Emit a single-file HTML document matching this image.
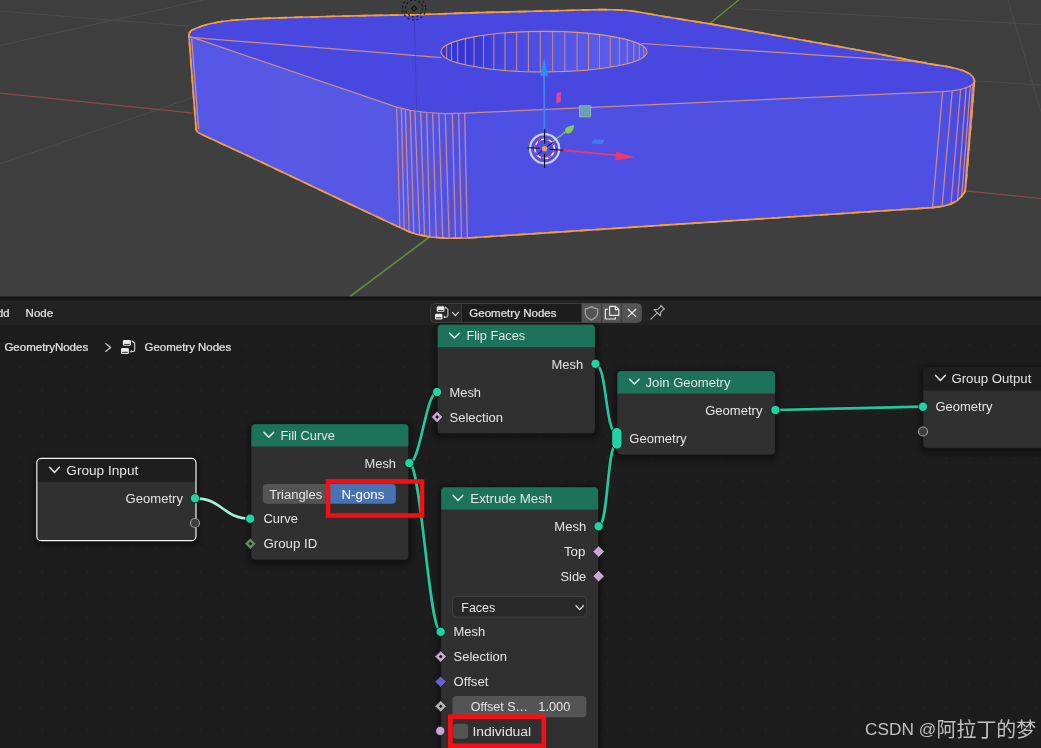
<!DOCTYPE html>
<html><head><meta charset="utf-8"><title>Geometry Nodes</title>
<style>
html,body{margin:0;padding:0;background:#1d1d1d;}
body{width:1041px;height:748px;overflow:hidden;}
svg{display:block;will-change:transform;}
text{font-family:"Liberation Sans", sans-serif;stroke-width:0.22px;paint-order:stroke fill;}
</style></head><body>
<svg width="1041" height="748" viewBox="0 0 1041 748">
<g id="viewport">
<rect x="0" y="0" width="1041" height="297" fill="#3f3f3f"/>
<g stroke="#4c4c4c" stroke-width="1" fill="none">
<line x1="0" y1="11.2" x2="188.6" y2="26.2"/>
<line x1="0" y1="45.5" x2="203" y2="0"/>
<line x1="0" y1="163.7" x2="192.6" y2="97.6"/>
<line x1="735" y1="8.5" x2="1041" y2="24.6"/>
<line x1="974" y1="80.8" x2="1041" y2="85"/>
<line x1="1008" y1="0" x2="1041" y2="112"/>
</g>
<line x1="0" y1="93.1" x2="193.2" y2="113.2" stroke="#8a474c" stroke-width="1.2"/>
<line x1="965.4" y1="190.8" x2="1041" y2="198.5" stroke="#8a474c" stroke-width="1.2"/>
<line x1="429.4" y1="237" x2="350" y2="296.5" stroke="#628c3a" stroke-width="1.6"/>
<line x1="710" y1="23.5" x2="738.6" y2="0" stroke="#628c3a" stroke-width="1.4"/>
</g>
<g id="object">
<polygon points="189.0,37.5 189.3,33.0 191.6,30.3 195.0,28.7 202.0,26.0 210.0,23.7 220.0,21.8 232.4,20.3 257.4,18.6 290.0,17.5 327.5,16.5 365.0,15.6 415.0,14.7 477.5,12.6 545.0,11.0 582.0,10.0 600.0,9.6 614.0,9.7 625.0,10.2 637.5,11.7 662.4,16.2 710.0,23.9 836.5,46.1 873.0,52.8 909.5,60.1 927.8,63.6 946.0,66.4 957.0,68.7 964.3,71.1 969.7,73.8 973.0,77.0 974.5,80.8 965.6,188.4 964.7,192.0 961.8,196.1 957.5,200.4 951.0,204.0 942.1,206.4 932.5,207.6 467.4,238.0 447.4,238.3 430.0,237.0 417.4,234.5 409.0,231.8 400.0,227.6 341.2,200.0 260.0,161.5 199.8,133.6 197.4,131.9 196.1,129.7" fill="#4e50e3"/>
<defs><linearGradient id="gfl" x1="190" y1="0" x2="400" y2="0" gradientUnits="userSpaceOnUse"><stop offset="0" stop-color="#5456e4"/><stop offset="0.5" stop-color="#585ae6"/><stop offset="1" stop-color="#5557e5"/></linearGradient><linearGradient id="gcl" x1="396" y1="0" x2="468" y2="0" gradientUnits="userSpaceOnUse"><stop offset="0" stop-color="#5557e5"/><stop offset="1" stop-color="#4e50e3"/></linearGradient><linearGradient id="ghole" x1="441" y1="0" x2="647" y2="0" gradientUnits="userSpaceOnUse"><stop offset="0" stop-color="#3a3ad8"/><stop offset="0.12" stop-color="#3434d6"/><stop offset="0.3" stop-color="#4446e0"/><stop offset="0.55" stop-color="#5255e6"/><stop offset="0.8" stop-color="#5a5ce8"/><stop offset="1" stop-color="#5658e6"/></linearGradient><clipPath id="chole"><ellipse cx="544" cy="51.7" rx="103" ry="20.3"/></clipPath></defs>
<polygon points="190.3,36.6 396.7,107.1 400.0,227.6 341.2,200.0 260.0,161.5 199.8,133.6 197.4,131.9 196.1,129.7" fill="url(#gfl)"/>
<polygon points="396.7,107.1 410.2,110.3 426.7,112.5 444.8,113.5 464.7,113.1 467.4,238.0 447.4,238.3 430.0,237.0 417.4,234.5 409.0,231.8 400.0,227.6" fill="url(#gcl)"/>
<defs><linearGradient id="gcr" x1="938" y1="0" x2="975" y2="0" gradientUnits="userSpaceOnUse"><stop offset="0" stop-color="#4e50e3"/><stop offset="0.5" stop-color="#4a4be0"/><stop offset="1" stop-color="#4242d8"/></linearGradient></defs>
<polygon points="942.6,91.6 952.2,90.9 961.8,89.2 969.0,86.6 973.4,83.7 974.5,80.8 965.6,188.4 964.7,192.0 961.8,196.1 957.5,200.4 951.0,204.0 942.1,206.4 932.5,207.6" fill="url(#gcr)"/>
<polygon points="189.0,37.5 189.3,33.0 191.6,30.3 195.0,28.7 202.0,26.0 210.0,23.7 220.0,21.8 232.4,20.3 257.4,18.6 290.0,17.5 327.5,16.5 365.0,15.6 415.0,14.7 477.5,12.6 545.0,11.0 582.0,10.0 600.0,9.6 614.0,9.7 625.0,10.2 637.5,11.7 662.4,16.2 710.0,23.9 836.5,46.1 873.0,52.8 909.5,60.1 927.8,63.6 946.0,66.4 957.0,68.7 964.3,71.1 969.7,73.8 973.0,77.0 974.5,80.8 973.4,83.7 969.0,86.6 961.8,89.2 952.2,90.9 942.6,91.6 464.7,113.1 444.8,113.5 426.7,112.5 410.2,110.3 396.7,107.1 190.3,36.6" fill="#4848e0"/>
<ellipse cx="544" cy="51.7" rx="103" ry="20.3" fill="url(#ghole)"/>
<g stroke="#ca8a8c" stroke-width="1" fill="none" clip-path="url(#chole)">
<line x1="446.7" y1="28" x2="446.7" y2="76"/>
<line x1="451.5" y1="28" x2="451.5" y2="76"/>
<line x1="457.7" y1="28" x2="457.7" y2="76"/>
<line x1="465.4" y1="28" x2="465.4" y2="76"/>
<line x1="474" y1="28" x2="474" y2="76"/>
<line x1="483.5" y1="28" x2="483.5" y2="76"/>
<line x1="493.9" y1="28" x2="493.9" y2="76"/>
<line x1="505" y1="28" x2="505" y2="76"/>
<line x1="516.7" y1="28" x2="516.7" y2="76"/>
<line x1="528.4" y1="28" x2="528.4" y2="76"/>
<line x1="540.3" y1="28" x2="540.3" y2="76"/>
<line x1="552.7" y1="28" x2="552.7" y2="76"/>
<line x1="564.9" y1="28" x2="564.9" y2="76"/>
<line x1="577" y1="28" x2="577" y2="76"/>
<line x1="588.5" y1="28" x2="588.5" y2="76"/>
<line x1="599.5" y1="28" x2="599.5" y2="76"/>
<line x1="610.2" y1="28" x2="610.2" y2="76"/>
<line x1="619.4" y1="28" x2="619.4" y2="76"/>
<line x1="627.2" y1="28" x2="627.2" y2="76"/>
<line x1="633.8" y1="28" x2="633.8" y2="76"/>
<line x1="639.3" y1="28" x2="639.3" y2="76"/>
<line x1="643.7" y1="28" x2="643.7" y2="76"/>
</g>
<ellipse cx="544" cy="51.7" rx="103" ry="20.3" fill="none" stroke="#e09a78" stroke-width="1.1"/>
<g stroke="#ca8a8c" stroke-width="1.25" fill="none">
<polyline points="974.5,80.8 973.4,83.7 969.0,86.6 961.8,89.2 952.2,90.9 942.6,91.6 464.7,113.1 444.8,113.5 426.7,112.5 410.2,110.3 396.7,107.1 190.3,36.6"/>
<line x1="190" y1="37.3" x2="441.5" y2="57.6"/>
<line x1="641.2" y1="43.5" x2="927" y2="62.4"/>
<line x1="396.7" y1="107.1" x2="399.9" y2="227.5"/>
<line x1="401.4" y1="108.3" x2="404.2" y2="229.6"/>
<line x1="405.3" y1="109.2" x2="409.1" y2="231.8"/>
<line x1="410.2" y1="110.3" x2="413.8" y2="233.4"/>
<line x1="414.9" y1="111.1" x2="419.6" y2="235.1"/>
<line x1="420.7" y1="111.9" x2="424.5" y2="236.1"/>
<line x1="426.7" y1="112.5" x2="429.9" y2="237"/>
<line x1="432.6" y1="113" x2="436.3" y2="237.6"/>
<line x1="438.8" y1="113.3" x2="442.7" y2="238"/>
<line x1="445.3" y1="113.5" x2="449.1" y2="238.2"/>
<line x1="452.3" y1="113.5" x2="455.5" y2="238.2"/>
<line x1="458.7" y1="113.3" x2="461.5" y2="238.1"/>
<line x1="464.7" y1="113.1" x2="467.3" y2="238"/>
<line x1="942.6" y1="91.6" x2="932.5" y2="207.6"/>
<line x1="952.2" y1="90.9" x2="942.1" y2="206.4"/>
<line x1="960.6" y1="89.5" x2="951" y2="204"/>
<line x1="966.2" y1="87.8" x2="957.5" y2="200.4"/>
<line x1="970.3" y1="85.9" x2="961.8" y2="196.1"/>
<line x1="972.7" y1="84.3" x2="964.7" y2="192"/>
</g>
<line x1="414.3" y1="15" x2="416.7" y2="111.5" stroke="#34349a" stroke-width="0.9" opacity="0.5"/>
<polygon points="189.0,37.5 189.3,33.0 191.6,30.3 195.0,28.7 202.0,26.0 210.0,23.7 220.0,21.8 232.4,20.3 257.4,18.6 290.0,17.5 327.5,16.5 365.0,15.6 415.0,14.7 477.5,12.6 545.0,11.0 582.0,10.0 600.0,9.6 614.0,9.7 625.0,10.2 637.5,11.7 662.4,16.2 710.0,23.9 836.5,46.1 873.0,52.8 909.5,60.1 927.8,63.6 946.0,66.4 957.0,68.7 964.3,71.1 969.7,73.8 973.0,77.0 974.5,80.8 965.6,188.4 964.7,192.0 961.8,196.1 957.5,200.4 951.0,204.0 942.1,206.4 932.5,207.6 467.4,238.0 447.4,238.3 430.0,237.0 417.4,234.5 409.0,231.8 400.0,227.6 341.2,200.0 260.0,161.5 199.8,133.6 197.4,131.9 196.1,129.7" fill="none" stroke="#e69c6a" stroke-width="1.6" stroke-linejoin="round"/>
<polygon points="189.0,37.5 189.3,33.0 191.6,30.3 195.0,28.7 202.0,26.0 210.0,23.7 220.0,21.8 232.4,20.3 257.4,18.6 290.0,17.5 327.5,16.5 365.0,15.6 415.0,14.7 477.5,12.6 545.0,11.0 582.0,10.0 600.0,9.6 614.0,9.7 625.0,10.2 637.5,11.7 662.4,16.2 710.0,23.9 836.5,46.1 873.0,52.8 909.5,60.1 927.8,63.6 946.0,66.4 957.0,68.7 964.3,71.1 969.7,73.8 973.0,77.0 974.5,80.8 965.6,188.4 964.7,192.0 961.8,196.1 957.5,200.4 951.0,204.0 942.1,206.4 932.5,207.6 467.4,238.0 447.4,238.3 430.0,237.0 417.4,234.5 409.0,231.8 400.0,227.6 341.2,200.0 260.0,161.5 199.8,133.6 197.4,131.9 196.1,129.7" fill="none" stroke="#f5a328" stroke-width="1.6" stroke-linejoin="round" stroke-dasharray="9 7"/>
<line x1="191.7" y1="38.5" x2="198.7" y2="129" stroke="#d09088" stroke-width="1.2"/>
</g>
<g id="light" fill="none" stroke="#101010" stroke-width="1.1">
<path d="M414.1 5.9 L416.6 8.4 L414.1 10.9 L411.6 8.4 Z"/>
<circle cx="414.1" cy="8.4" r="8.4" stroke-dasharray="2 2.4"/>
<circle cx="414.1" cy="8.4" r="11.6" stroke-dasharray="2 2.6"/>
</g>
<g id="gizmo">
<line x1="544.4" y1="131" x2="544.1" y2="75" stroke="#3f86ee" stroke-width="1.7"/>
<polygon points="544.1,57.8 547.9,76 540.3,76" fill="#2d8cf5"/>
<polygon points="556.6,93 561,91.7 560.6,102 556.3,103.2" fill="#e0469a"/>
<rect x="579.6" y="105.8" width="10.8" height="11" fill="#6aa8b4" stroke="#9cc89a" stroke-width="1" opacity="0.9"/>
<polygon points="593.5,139.5 604.6,139.8 602.4,143.9 591.4,143.6" fill="#3c86f0" opacity="0.8"/>
<line x1="552" y1="142" x2="566.5" y2="131.2" stroke="#86c070" stroke-width="1.5" opacity="0.9"/>
<path d="M574.4 124.9 Q573.8 129.5 571.6 132 Q569 134.6 566.3 133.2 Q564.2 131.2 565.3 128.6 Q567 126 574.4 124.9 Z" fill="#82c85a"/>
<line x1="560.6" y1="150" x2="617" y2="155.3" stroke="#de3a7e" stroke-width="1.8"/>
<polygon points="634.5,157.2 615.4,160.6 616.3,151.5" fill="#ee3a6a"/>
<circle cx="544.6" cy="148.7" r="14.6" fill="none" stroke="#cfcff2" stroke-width="2.2"/>
<circle cx="544.6" cy="148.7" r="9.8" fill="none" stroke="#ece8f4" stroke-width="1.5"/>
<circle cx="544.6" cy="148.7" r="9.8" fill="none" stroke="#d02a58" stroke-width="1.5" stroke-dasharray="3.85 3.85"/>
<g stroke="#0a0a28" stroke-width="1.1"><line x1="544.6" y1="129.2" x2="544.6" y2="143.7"/><line x1="544.6" y1="153.7" x2="544.6" y2="167.7"/><line x1="527.6" y1="147.7" x2="539.6" y2="148.2"/><line x1="549.6" y1="149.2" x2="563.6" y2="150.2"/><line x1="537.6" y1="154.2" x2="542.1" y2="150.7" stroke-width="1"/><line x1="547.1" y1="146.7" x2="552.6" y2="142.7" stroke-width="1"/></g>
<circle cx="544.6" cy="148.7" r="2.6" fill="#f0a23c"/>
</g>
<rect x="0" y="296.5" width="1041" height="3.5" fill="#161616"/>
<rect x="0" y="300" width="1041" height="448" fill="#1d1d1d"/>
<defs><filter id="blur" x="-20%" y="-20%" width="140%" height="140%"><feGaussianBlur stdDeviation="3"/></filter></defs>
<defs><pattern id="dots" x="8.50" y="-6.82" width="22.6" height="22.68" patternUnits="userSpaceOnUse"><rect x="10.50" y="10.54" width="1.6" height="1.6" fill="#262626"/></pattern></defs>
<rect x="0" y="326" width="1041" height="422" fill="url(#dots)"/>
<rect x="0" y="299.8" width="1041" height="25.3" fill="#222222"/>
<text x="-10.6" y="317.0" font-size="10.7" fill="#e4e4e4" stroke="#e4e4e4" text-anchor="start" textLength="20.0" lengthAdjust="spacingAndGlyphs">Add</text>
<text x="25.6" y="317.0" font-size="10.7" fill="#e4e4e4" stroke="#e4e4e4" text-anchor="start" textLength="27.6" lengthAdjust="spacingAndGlyphs">Node</text>
<text x="4.4" y="351.0" font-size="10.7" fill="#e4e4e4" stroke="#e4e4e4" text-anchor="start" textLength="83.8" lengthAdjust="spacingAndGlyphs">GeometryNodes</text>
<polyline points="105.8,343.6 110.6,347.5 105.8,351.4" fill="none" stroke="#dcdcdc" stroke-width="1.2" stroke-linecap="round" stroke-linejoin="round"/>
<g transform="translate(121.0,340.0) scale(1.0)">
<rect x="1.9" y="0" width="8.1" height="5.85" rx="1.3" fill="#ececec"/>
<rect x="0" y="7.9" width="7.9" height="6.2" rx="1.3" fill="#ececec"/>
<rect x="3.2" y="3.9" width="5.6" height="0.9" fill="#1a1a1a"/>
<rect x="1.2" y="11.8" width="5.6" height="0.95" fill="#1a1a1a"/>
<path d="M11 1.2 L13.7 3 V10 Q13.7 11.4 12.3 11.4 H10.4" fill="none" stroke="#e0e0e0" stroke-width="1.05" stroke-linejoin="round"/>
<path d="M10.9 0 V2.6 L12.6 1.7 Z" fill="#e0e0e0"/>
<path d="M10.6 9.9 V12.9 L8.9 11.4 Z" fill="#e0e0e0"/>
</g>
<text x="144.6" y="350.8" font-size="10.7" fill="#e4e4e4" stroke="#e4e4e4" text-anchor="start" textLength="86.6" lengthAdjust="spacingAndGlyphs">Geometry Nodes</text>
<rect x="33.8" y="457.3" width="165.2" height="88.4" rx="7" fill="#000" opacity="0.4" filter="url(#blur)"/>
<clipPath id="cn36_458"><rect x="36.8" y="458.3" width="159.2" height="82.4" rx="4.5"/></clipPath>
<g clip-path="url(#cn36_458)"><rect x="36.8" y="458.3" width="159.2" height="82.4" fill="#303030"/>
<rect x="36.8" y="458.3" width="159.2" height="23.5" fill="#1e1e1e"/></g>
<rect x="36.8" y="458.3" width="159.2" height="82.4" rx="4.5" fill="none" stroke="#f2f2f2" stroke-width="1.2"/>
<rect x="248.0" y="422.7" width="163.8" height="142.3" rx="7" fill="#000" opacity="0.4" filter="url(#blur)"/>
<clipPath id="cn251_423"><rect x="251.0" y="423.7" width="157.8" height="136.3" rx="4.5"/></clipPath>
<g clip-path="url(#cn251_423)"><rect x="251.0" y="423.7" width="157.8" height="136.3" fill="#303030"/>
<rect x="251.0" y="423.7" width="157.8" height="22.8" fill="#1d725a"/></g>
<rect x="251.0" y="423.7" width="157.8" height="136.3" rx="4.5" fill="none" stroke="#161616" stroke-width="0.8" opacity="0.8"/>
<rect x="434.2" y="323.2" width="164.2" height="115.5" rx="7" fill="#000" opacity="0.4" filter="url(#blur)"/>
<clipPath id="cn437_324"><rect x="437.2" y="324.2" width="158.2" height="109.5" rx="4.5"/></clipPath>
<g clip-path="url(#cn437_324)"><rect x="437.2" y="324.2" width="158.2" height="109.5" fill="#303030"/>
<rect x="437.2" y="324.2" width="158.2" height="22.9" fill="#1d725a"/></g>
<rect x="437.2" y="324.2" width="158.2" height="109.5" rx="4.5" fill="none" stroke="#161616" stroke-width="0.8" opacity="0.8"/>
<rect x="613.9" y="369.7" width="164.5" height="90.2" rx="7" fill="#000" opacity="0.4" filter="url(#blur)"/>
<clipPath id="cn616_370"><rect x="616.9" y="370.7" width="158.5" height="84.2" rx="4.5"/></clipPath>
<g clip-path="url(#cn616_370)"><rect x="616.9" y="370.7" width="158.5" height="84.2" fill="#303030"/>
<rect x="616.9" y="370.7" width="158.5" height="22.8" fill="#1d725a"/></g>
<rect x="616.9" y="370.7" width="158.5" height="84.2" rx="4.5" fill="none" stroke="#161616" stroke-width="0.8" opacity="0.8"/>
<rect x="920.0" y="365.8" width="166.0" height="87.6" rx="7" fill="#000" opacity="0.4" filter="url(#blur)"/>
<clipPath id="cn923_366"><rect x="923.0" y="366.8" width="160.0" height="81.6" rx="4.5"/></clipPath>
<g clip-path="url(#cn923_366)"><rect x="923.0" y="366.8" width="160.0" height="81.6" fill="#303030"/>
<rect x="923.0" y="366.8" width="160.0" height="23.8" fill="#1e1e1e"/></g>
<rect x="923.0" y="366.8" width="160.0" height="81.6" rx="4.5" fill="none" stroke="#161616" stroke-width="0.8" opacity="0.8"/>
<rect x="437.8" y="485.8" width="163.8" height="296.0" rx="7" fill="#000" opacity="0.4" filter="url(#blur)"/>
<clipPath id="cn440_486"><rect x="440.8" y="486.8" width="157.8" height="290.0" rx="4.5"/></clipPath>
<g clip-path="url(#cn440_486)"><rect x="440.8" y="486.8" width="157.8" height="290.0" fill="#303030"/>
<rect x="440.8" y="486.8" width="157.8" height="22.8" fill="#1d725a"/></g>
<rect x="440.8" y="486.8" width="157.8" height="290.0" rx="4.5" fill="none" stroke="#161616" stroke-width="0.8" opacity="0.8"/>
<path d="M195.0 498.3 C222.7 498.3 222.7 518.7 250.4 518.7" fill="none" stroke="#141414" stroke-width="4.300000000000001" opacity="0.55"/>
<path d="M195.0 498.3 C222.7 498.3 222.7 518.7 250.4 518.7" fill="none" stroke="#a8ecd9" stroke-width="2.7"/>
<path d="M409.3 463.1 C420.4 463.1 426.0 392.0 437.1 392.0" fill="none" stroke="#141414" stroke-width="4.300000000000001" opacity="0.55"/>
<path d="M409.3 463.1 C420.4 463.1 426.0 392.0 437.1 392.0" fill="none" stroke="#22c79c" stroke-width="2.7"/>
<path d="M409.3 463.1 C421.2 463.1 428.8 631.8 440.7 631.8" fill="none" stroke="#141414" stroke-width="4.300000000000001" opacity="0.55"/>
<path d="M409.3 463.1 C421.2 463.1 428.8 631.8 440.7 631.8" fill="none" stroke="#22c79c" stroke-width="2.7"/>
<path d="M595.4 363.8 C607.1 363.8 605.0 433.5 616.7 433.5" fill="none" stroke="#141414" stroke-width="4.300000000000001" opacity="0.55"/>
<path d="M595.4 363.8 C607.1 363.8 605.0 433.5 616.7 433.5" fill="none" stroke="#22c79c" stroke-width="2.7"/>
<path d="M598.6 526.3 C608.6 526.3 606.7 443.5 616.7 443.5" fill="none" stroke="#141414" stroke-width="4.300000000000001" opacity="0.55"/>
<path d="M598.6 526.3 C608.6 526.3 606.7 443.5 616.7 443.5" fill="none" stroke="#22c79c" stroke-width="2.7"/>
<path d="M775.4 410.0 C780.8 410.0 917.6 406.7 923.0 406.7" fill="none" stroke="#141414" stroke-width="4.300000000000001" opacity="0.55"/>
<path d="M775.4 410.0 C780.8 410.0 917.6 406.7 923.0 406.7" fill="none" stroke="#22c79c" stroke-width="2.7"/>
<polyline points="49.6,467.2 54.5,472.4 59.4,467.2" fill="none" stroke="#e4e4e4" stroke-width="1.5" stroke-linecap="round" stroke-linejoin="round"/>
<text x="66.3" y="474.9" font-size="12" fill="#e4e4e4" text-anchor="start" textLength="72.0" lengthAdjust="spacingAndGlyphs">Group Input</text>
<text x="183.0" y="503.0" font-size="12" fill="#e4e4e4" text-anchor="end" textLength="57.5" lengthAdjust="spacingAndGlyphs">Geometry</text>
<circle cx="195.0" cy="498.3" r="4.6" fill="#1fd3a3" stroke="#191919" stroke-width="0.8"/>
<circle cx="195.0" cy="523.0" r="4.5" fill="#3e3e3e" stroke="#989898" stroke-width="1.2"/>
<polyline points="264.0,432.4 268.8,437.2 273.6,432.4" fill="none" stroke="#e4e4e4" stroke-width="1.5" stroke-linecap="round" stroke-linejoin="round"/>
<text x="280.5" y="439.7" font-size="12" fill="#e4e4e4" text-anchor="start" textLength="54.4" lengthAdjust="spacingAndGlyphs">Fill Curve</text>
<text x="396.0" y="468.0" font-size="12" fill="#e4e4e4" text-anchor="end" textLength="31.4" lengthAdjust="spacingAndGlyphs">Mesh</text>
<circle cx="409.3" cy="463.1" r="4.6" fill="#1fd3a3" stroke="#191919" stroke-width="0.8"/>
<path d="M266.8 484 H329 V503.8 H266.8 a4 4 0 0 1 -4 -4 V488 a4 4 0 0 1 4 -4 Z" fill="#545454"/>
<path d="M329 484 H391.8 a4 4 0 0 1 4 4 V499.8 a4 4 0 0 1 -4 4 H329 Z" fill="#4772b3"/>
<text x="269.2" y="498.8" font-size="12" fill="#e4e4e4" text-anchor="start" textLength="53.1" lengthAdjust="spacingAndGlyphs">Triangles</text>
<text x="341.5" y="498.8" font-size="12" fill="#ffffff" text-anchor="start" textLength="42.8" lengthAdjust="spacingAndGlyphs">N-gons</text>
<circle cx="250.2" cy="518.7" r="4.6" fill="#1fd3a3" stroke="#191919" stroke-width="0.8"/>
<text x="263.4" y="523.0" font-size="12" fill="#e4e4e4" text-anchor="start" textLength="34.5" lengthAdjust="spacingAndGlyphs">Curve</text>
<path d="M250.4 537.9 L256.2 543.7 L250.4 549.5 L244.6 543.7 Z" fill="#5d8c5d" stroke="#191919" stroke-width="0.8"/>
<path d="M250.4 541.8 L252.3 543.7 L250.4 545.6 L248.5 543.7 Z" fill="#1c1c1c"/>
<text x="263.4" y="548.0" font-size="12" fill="#e4e4e4" text-anchor="start" textLength="53.9" lengthAdjust="spacingAndGlyphs">Group ID</text>
<rect x="328.05" y="481.5" width="94" height="34" fill="none" stroke="#f50f14" stroke-width="4.5"/>
<polyline points="449.6,333.2 454.4,338.0 459.2,333.2" fill="none" stroke="#e4e4e4" stroke-width="1.5" stroke-linecap="round" stroke-linejoin="round"/>
<text x="466.4" y="340.2" font-size="12" fill="#e4e4e4" text-anchor="start" textLength="58.8" lengthAdjust="spacingAndGlyphs">Flip Faces</text>
<text x="583.2" y="368.9" font-size="12" fill="#e4e4e4" text-anchor="end" textLength="31.7" lengthAdjust="spacingAndGlyphs">Mesh</text>
<circle cx="595.4" cy="363.8" r="4.6" fill="#1fd3a3" stroke="#191919" stroke-width="0.8"/>
<circle cx="437.1" cy="392.0" r="4.6" fill="#1fd3a3" stroke="#191919" stroke-width="0.8"/>
<text x="449.5" y="396.9" font-size="12" fill="#e4e4e4" text-anchor="start" textLength="31.5" lengthAdjust="spacingAndGlyphs">Mesh</text>
<path d="M437.1 411.2 L442.9 417.0 L437.1 422.8 L431.3 417.0 Z" fill="#cca6d6" stroke="#191919" stroke-width="0.8"/>
<path d="M437.1 415.1 L439.0 417.0 L437.1 418.9 L435.2 417.0 Z" fill="#1c1c1c"/>
<text x="449.5" y="421.9" font-size="12" fill="#e4e4e4" text-anchor="start" textLength="53.5" lengthAdjust="spacingAndGlyphs">Selection</text>
<polyline points="629.6,379.2 634.4,384.0 639.2,379.2" fill="none" stroke="#e4e4e4" stroke-width="1.5" stroke-linecap="round" stroke-linejoin="round"/>
<text x="645.6" y="387.1" font-size="12" fill="#e4e4e4" text-anchor="start" textLength="84.9" lengthAdjust="spacingAndGlyphs">Join Geometry</text>
<text x="762.5" y="414.5" font-size="12" fill="#e4e4e4" text-anchor="end" textLength="57.3" lengthAdjust="spacingAndGlyphs">Geometry</text>
<circle cx="775.4" cy="410.0" r="4.6" fill="#1fd3a3" stroke="#191919" stroke-width="0.8"/>
<rect x="611.7" y="427.4" width="10.4" height="21.8" rx="5.2" fill="#1fd3a3" stroke="#191919" stroke-width="1"/>
<text x="629.3" y="442.7" font-size="12" fill="#e4e4e4" text-anchor="start" textLength="57.3" lengthAdjust="spacingAndGlyphs">Geometry</text>
<polyline points="935.6,375.4 940.4,380.4 945.2,375.4" fill="none" stroke="#e4e4e4" stroke-width="1.5" stroke-linecap="round" stroke-linejoin="round"/>
<text x="951.4" y="382.8" font-size="12" fill="#e4e4e4" text-anchor="start" textLength="80.0" lengthAdjust="spacingAndGlyphs">Group Output</text>
<circle cx="923.0" cy="406.7" r="4.6" fill="#1fd3a3" stroke="#191919" stroke-width="0.8"/>
<text x="935.4" y="410.6" font-size="12" fill="#e4e4e4" text-anchor="start" textLength="57.1" lengthAdjust="spacingAndGlyphs">Geometry</text>
<circle cx="923.0" cy="431.5" r="4.5" fill="#3e3e3e" stroke="#989898" stroke-width="1.2"/>
<polyline points="453.2,495.4 458.0,500.4 462.8,495.4" fill="none" stroke="#e4e4e4" stroke-width="1.5" stroke-linecap="round" stroke-linejoin="round"/>
<text x="470.3" y="502.8" font-size="12" fill="#e4e4e4" text-anchor="start" textLength="81.9" lengthAdjust="spacingAndGlyphs">Extrude Mesh</text>
<text x="586.2" y="531.0" font-size="12" fill="#e4e4e4" text-anchor="end" textLength="31.9" lengthAdjust="spacingAndGlyphs">Mesh</text>
<circle cx="598.6" cy="526.3" r="4.6" fill="#1fd3a3" stroke="#191919" stroke-width="0.8"/>
<text x="585.3" y="556.3" font-size="12" fill="#e4e4e4" text-anchor="end" textLength="21.4" lengthAdjust="spacingAndGlyphs">Top</text>
<path d="M598.6 545.8 L604.4 551.6 L598.6 557.4 L592.8 551.6 Z" fill="#cca6d6" stroke="#191919" stroke-width="0.8"/>
<text x="586.2" y="580.9" font-size="12" fill="#e4e4e4" text-anchor="end" textLength="25.7" lengthAdjust="spacingAndGlyphs">Side</text>
<path d="M598.6 570.4 L604.4 576.2 L598.6 582.0 L592.8 576.2 Z" fill="#cca6d6" stroke="#191919" stroke-width="0.8"/>
<rect x="452.5" y="596.5" width="133.9" height="20.5" rx="4" fill="#282828" stroke="#3f3f3f" stroke-width="1"/>
<text x="461.3" y="611.9" font-size="12" fill="#e4e4e4" text-anchor="start" textLength="34.0" lengthAdjust="spacingAndGlyphs">Faces</text>
<polyline points="576.0,605.8 579.7,609.6 583.4,605.8" fill="none" stroke="#e4e4e4" stroke-width="1.3" stroke-linecap="round" stroke-linejoin="round"/>
<circle cx="440.7" cy="631.8" r="4.6" fill="#1fd3a3" stroke="#191919" stroke-width="0.8"/>
<text x="453.6" y="635.9" font-size="12" fill="#e4e4e4" text-anchor="start" textLength="31.6" lengthAdjust="spacingAndGlyphs">Mesh</text>
<path d="M440.7 650.8 L446.5 656.6 L440.7 662.4 L434.9 656.6 Z" fill="#cca6d6" stroke="#191919" stroke-width="0.8"/>
<path d="M440.7 654.7 L442.6 656.6 L440.7 658.5 L438.8 656.6 Z" fill="#1c1c1c"/>
<text x="453.6" y="661.1" font-size="12" fill="#e4e4e4" text-anchor="start" textLength="53.4" lengthAdjust="spacingAndGlyphs">Selection</text>
<path d="M440.7 675.9 L446.5 681.7 L440.7 687.5 L434.9 681.7 Z" fill="#6363c7" stroke="#191919" stroke-width="0.8"/>
<text x="453.6" y="685.9" font-size="12" fill="#e4e4e4" text-anchor="start" textLength="34.8" lengthAdjust="spacingAndGlyphs">Offset</text>
<path d="M440.7 700.5 L446.5 706.3 L440.7 712.1 L434.9 706.3 Z" fill="#b4b4b4" stroke="#191919" stroke-width="0.8"/>
<path d="M440.7 704.4 L442.6 706.3 L440.7 708.2 L438.8 706.3 Z" fill="#1c1c1c"/>
<rect x="452.5" y="696" width="133.9" height="21.3" rx="4" fill="#545454"/>
<text x="470.7" y="710.6" font-size="12" fill="#e4e4e4" text-anchor="start" textLength="57.3" lengthAdjust="spacingAndGlyphs">Offset S…</text>
<text x="538.3" y="710.6" font-size="12" fill="#e4e4e4" text-anchor="start" textLength="32.0" lengthAdjust="spacingAndGlyphs">1.000</text>
<circle cx="440.3" cy="730.9" r="4.6" fill="#cca6d6" stroke="#191919" stroke-width="0.8"/>
<rect x="453.1" y="723.8" width="15" height="15" rx="3" fill="#545454"/>
<text x="472.4" y="735.6" font-size="12" fill="#e4e4e4" text-anchor="start" textLength="58.8" lengthAdjust="spacingAndGlyphs">Individual</text>
<rect x="450.4" y="716.75" width="93.4" height="29.1" fill="none" stroke="#f50f14" stroke-width="4.7"/>
<rect x="430.6" y="303.5" width="31" height="19" rx="4" fill="#282828"/>
<path d="M461.5 303.5 H581.5 V322.5 H461.5 Z" fill="#1d1d1d"/>
<path d="M434.6 303.5 H637.5 a4 4 0 0 1 4 4 V318.5 a4 4 0 0 1 -4 4 H434.6 a4 4 0 0 1 -4 -4 V307.5 a4 4 0 0 1 4 -4 Z" fill="none" stroke="#3d3d3d" stroke-width="1"/>
<path d="M581.5 303.5 H637.5 a4 4 0 0 1 4 4 V318.5 a4 4 0 0 1 -4 4 H581.5 Z" fill="#545454"/>
<g stroke="#3a3a3a" stroke-width="1"><line x1="461.5" y1="303.5" x2="461.5" y2="322.5"/><line x1="601.5" y1="303.5" x2="601.5" y2="322.5"/><line x1="621.5" y1="303.5" x2="621.5" y2="322.5"/></g>
<g transform="translate(435.0,306.3) scale(0.94)">
<rect x="1.9" y="0" width="8.1" height="5.85" rx="1.3" fill="#ececec"/>
<rect x="0" y="7.9" width="7.9" height="6.2" rx="1.3" fill="#ececec"/>
<rect x="3.2" y="3.9" width="5.6" height="0.9" fill="#1a1a1a"/>
<rect x="1.2" y="11.8" width="5.6" height="0.95" fill="#1a1a1a"/>
<path d="M11 1.2 L13.7 3 V10 Q13.7 11.4 12.3 11.4 H10.4" fill="none" stroke="#e0e0e0" stroke-width="1.05" stroke-linejoin="round"/>
<path d="M10.9 0 V2.6 L12.6 1.7 Z" fill="#e0e0e0"/>
<path d="M10.6 9.9 V12.9 L8.9 11.4 Z" fill="#e0e0e0"/>
</g>
<polyline points="452.4,312.4 455.4,315.6 458.4,312.4" fill="none" stroke="#e4e4e4" stroke-width="1.2" stroke-linecap="round" stroke-linejoin="round"/>
<text x="469.3" y="316.7" font-size="10.7" fill="#e4e4e4" stroke="#e4e4e4" text-anchor="start" textLength="87.2" lengthAdjust="spacingAndGlyphs">Geometry Nodes</text>
<path d="M591.5 306.6 C589.5 308 587.5 308.6 585.3 308.8 V312.5 C585.3 316 588 318.4 591.5 319.8 C595 318.4 597.7 316 597.7 312.5 V308.8 C595.5 308.6 593.5 308 591.5 306.6 Z" fill="none" stroke="#a0a0a0" stroke-width="1.3" stroke-linejoin="round"/>
<g fill="none" stroke="#e6e6e6" stroke-width="1.2" stroke-linejoin="round"><path d="M607.8 309.3 H605.4 V319 H615.4 V317.2"/><path d="M609.6 306.3 H615.6 L618.8 309.5 V315.4 H609.6 Z"/><path d="M615.4 306.5 V309.7 H618.6"/></g>
<g stroke="#e6e6e6" stroke-width="1.3" stroke-linecap="round"><line x1="628.2" y1="309.2" x2="635.8" y2="316.6"/><line x1="635.8" y1="309.2" x2="628.2" y2="316.6"/></g>
<g transform="translate(656.8,313.2) rotate(45)" fill="none" stroke="#b4b4b4" stroke-width="1.1" stroke-linejoin="round" stroke-linecap="round"><path d="M-2.6 -8.4 H2.6 M-2 -8.4 V-3.6 L-4.4 -0.6 H4.4 L2 -3.6 V-8.4"/><line x1="0" y1="-0.6" x2="0" y2="8.6"/></g>
<text x="865" y="735.2" font-size="17.4" fill="#d2d2d2" opacity="0.9" textLength="71.2" lengthAdjust="spacingAndGlyphs" style="font-family:'Liberation Sans','Noto Sans CJK SC',sans-serif">CSDN @</text>
<text x="936.6" y="736.6" font-size="20" fill="#d2d2d2" opacity="0.9" textLength="99.6" lengthAdjust="spacingAndGlyphs" style="font-family:'Liberation Sans','Noto Sans CJK SC',sans-serif">阿拉丁的梦</text>
</svg>
</body></html>
